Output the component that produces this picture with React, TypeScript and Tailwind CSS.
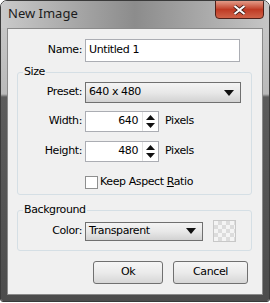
import React from "react";

const font = { fontFamily: '"DejaVu Sans", "Liberation Sans", sans-serif', letterSpacing: "-0.4px" };

// Spinner arrows for numeric fields
const Spin = () => (
  <div className="flex h-full w-[16px] flex-col items-center justify-center gap-[3px] border-l border-[#e2e2e2]">
    <svg width="9" height="5" viewBox="0 0 9 5">
      <path d="M4.5 0 L9 5 L0 5 Z" fill="#111" />
    </svg>
    <svg width="9" height="5" viewBox="0 0 9 5">
      <path d="M0 0 L9 0 L4.5 5 Z" fill="#111" />
    </svg>
  </div>
);

const Caret = () => (
  <svg width="10" height="6" viewBox="0 0 10 6">
    <path d="M0 0 L10 0 L5 6 Z" fill="#111" />
  </svg>
);

interface GroupProps {
  title: string;
  className?: string;
  children: React.ReactNode;
}

const Group = ({ title, className, children }: GroupProps) => (
  <div className={"relative ml-[9px] mr-[10px] rounded-[3px] border border-[#d5dfe5] " + (className ?? "")}>
    <span className="absolute -top-[8px] left-[5px] bg-[#f0f0f0] px-[1px] text-[11px] leading-[14px] text-black">
      {title}
    </span>
    {children}
  </div>
);

const Label = ({ text, w = "w-[67px]" }: { text: string; w?: string }) => (
  <div className={"pr-[3px] text-right text-[11px] text-black " + w}>{text}</div>
);

const NumField = ({ label, value }: { label: string; value: string }) => (
  <div className="flex items-center">
    <Label text={label} />
    <div className="flex h-[21px] w-[74px] items-center border border-[#abadb3] bg-white">
      <div className="flex-1 pr-[4px] text-right text-[11px]">{value}</div>
      <Spin />
    </div>
    <span className="ml-[6px] text-[11px]">Pixels</span>
  </div>
);

const Btn = ({ text, w }: { text: string; w: string }) => (
  <div
    className={
      "flex h-[23px] items-center justify-center rounded-[3px] border border-[#707070] bg-gradient-to-b from-[#f6f6f6] via-[#ebebeb] to-[#d6d6d6] text-[11px] text-black " +
      w
    }
  >
    {text}
  </div>
);

export default function App() {
  return (
    <div className="h-[303px] w-[270px] bg-white" style={font}>
      <div className="flex h-[302px] w-[270px] flex-col overflow-hidden rounded-t-[7px] rounded-b-[3px] border border-[#3a3a3a]">
        {/* title bar */}
        <div className="relative flex h-[27px] shrink-0 items-center bg-gradient-to-r from-[#cacaca] via-[#8c8c8c] to-[#c6c6c6] px-[7px]">
          <span
            className="mt-[-2px] text-[13px] tracking-normal text-[#1c1c1c]"
            style={{ fontFamily: '"Noto Sans", "DejaVu Sans", sans-serif' }}
          >
            New Image
          </span>
          <div className="absolute -top-[1px] right-[5px] flex h-[19px] w-[49px] items-center justify-center rounded-b-[4px] border border-[#4e2019] bg-gradient-to-b from-[#e29a88] via-[#bf3a24] to-[#cf6248]">
            <svg width="13" height="10" viewBox="0 0 13 10">
              <path d="M1.5 1 L11.5 9 M11.5 1 L1.5 9" stroke="#3a1a16" strokeWidth="3.6" />
              <path d="M1.5 1 L11.5 9 M11.5 1 L1.5 9" stroke="#ffffff" strokeWidth="2.2" />
            </svg>
          </div>
        </div>

        {/* frame body */}
        <div className="flex flex-1 flex-col bg-[linear-gradient(to_bottom,#c6c6c6_0,#bababa_66px,#5c5c5c_69px,#4c4c4c_100%)] px-[6px] pb-[6px]">
          {/* client area */}
          <div className="flex flex-1 flex-col border border-[#8a8a8a] bg-[#f0f0f0]">
            <div className="mt-[10px] flex items-center">
              <Label text="Name:" w="w-[77px]" />
              <div className="flex h-[23px] w-[155px] items-center border border-[#abadb3] bg-white pl-[3px] text-[11px]">
                Untitled 1
              </div>
            </div>

            <Group title="Size" className="mt-[10px] h-[123px]">
              <div className="mt-[9px] flex items-center">
                <Label text="Preset:" />
                <div className="flex h-[21px] w-[156px] items-center justify-between border border-[#707070] bg-gradient-to-b from-[#f4f4f4] via-[#e8e8e8] to-[#d2d2d2] pl-[3px] pr-[6px] text-[11px]">
                  640 x 480
                  <Caret />
                </div>
              </div>
              <div className="mt-[8px]">
                <NumField label="Width:" value="640" />
              </div>
              <div className="mt-[9px]">
                <NumField label="Height:" value="480" />
              </div>
              <div className="mt-[12px] flex items-center pl-[67px]">
                <div className="h-[13px] w-[13px] border border-[#8e8f8f] bg-white" />
                <span className="ml-[2px] text-[11px]">
                  Keep Aspect <span className="underline">R</span>atio
                </span>
              </div>
            </Group>

            <Group title="Background" className="mt-[15px] h-[41px]">
              <div className="mt-[9px] flex items-center">
                <Label text="Color:" />
                <div className="flex h-[19px] w-[118px] items-center justify-between border border-[#707070] bg-gradient-to-b from-[#f4f4f4] via-[#e8e8e8] to-[#d2d2d2] pl-[3px] pr-[6px] text-[11px]">
                  Transparent
                  <Caret />
                </div>
                <div className="ml-[10px] h-[22px] w-[23px] border border-[#c8c8c8] bg-[conic-gradient(#dcdcdc_25%,#f4f4f4_0_50%,#dcdcdc_0_75%,#f4f4f4_0)] bg-[length:8px_8px]" />
              </div>
            </Group>

            <div className="mt-[10px] flex justify-end gap-[10px] pr-[14px]">
              <Btn text="Ok" w="w-[70px]" />
              <Btn text="Cancel" w="w-[75px]" />
            </div>
          </div>
        </div>
      </div>
    </div>
  );
}
